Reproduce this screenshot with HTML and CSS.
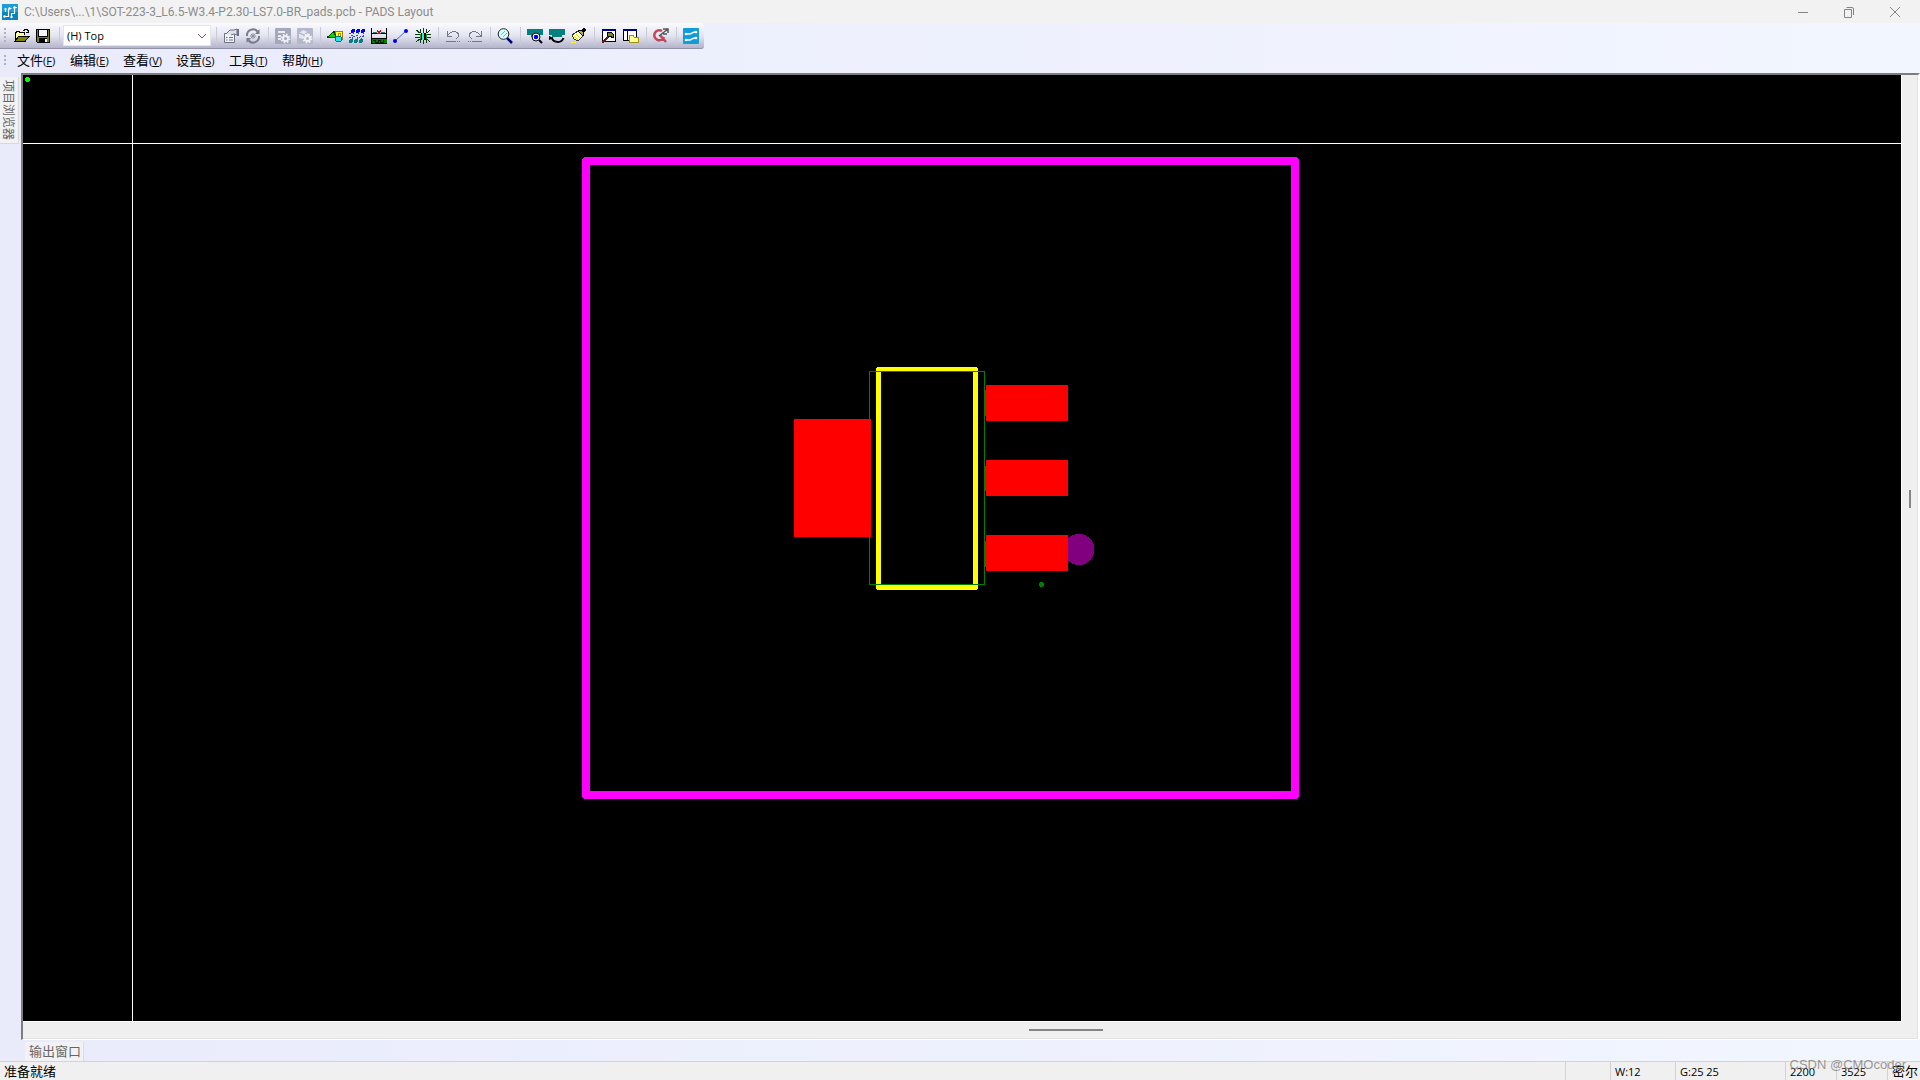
FILE: index.html
```html
<!DOCTYPE html>
<html lang="zh-CN">
<head>
<meta charset="utf-8">
<title>PADS Layout</title>
<link rel="stylesheet" href="styles.css">
</head>
<body>
<div class="app">
  <header class="titlebar">
    <svg class="logo" viewBox="0 0 16 16"><rect width="16" height="16" fill="#0c83bd"/><rect width="16" height="8" fill="#1b9cd8"/><path d="M2.500 12.500H6.500V5M3.500 4.500V8M9.500 13V9.500H12.500V3.500H15M8 4.500H9.500" fill="none" stroke="#fff" stroke-width="1.200"/><g fill="#fff"><circle cx="2.500" cy="12.500" r="1.200"/><circle cx="7.500" cy="4.500" r="1.200"/><circle cx="3.500" cy="5" r="1.100"/><circle cx="9.500" cy="13" r="1.200"/><circle cx="12.500" cy="3.500" r="1.200"/></g></svg>
    <h1 class="title">C:\Users\...\1\SOT-223-3_L6.5-W3.4-P2.30-LS7.0-BR_pads.pcb - PADS Layout</h1>
    <div class="window-buttons">
      <button class="window-button" aria-label="最小化"><svg viewBox="0 0 12 12"><path d="M1 6.500H11"/></svg></button>
      <button class="window-button" aria-label="还原"><svg viewBox="0 0 12 12"><path d="M1.500 3.500h7v8h-7zM3.500 1.500H9Q10.500 1.500 10.500 3V9"/></svg></button>
      <button class="window-button" aria-label="关闭"><svg viewBox="0 0 12 12"><path d="M1 1L11 11M11 1L1 11"/></svg></button>
    </div>
  </header>

  <div class="toolbar" role="toolbar">
    <span class="grip"></span>
    <button class="tool" aria-label="打开"><svg viewBox="0 0 16 16" shape-rendering="crispEdges"><path d="M1 13V4H2V3H5V4H10V7" fill="#ffffa0" stroke="#000"/><path d="M1 13.500L4.500 8.500H15L11 13.500Z" fill="#808000" stroke="#000"/><path d="M9 2.500H10V1.500H13V2.500H14V5M12 4.500H15" fill="none" stroke="#000"/></svg></button>
    <button class="tool" aria-label="保存"><svg viewBox="0 0 16 16" shape-rendering="crispEdges"><path d="M0 1H14V15H1L0 14Z" fill="#000"/><path d="M1 2H2V9H12V2H13V14H1Z" fill="#808000"/><path d="M3 2H11V8H3Z" fill="#f4f4fa"/><path d="M3 10H11V14H3Z" fill="#000"/><path d="M9 11H11V14H9Z" fill="#fff"/></svg></button>
    <span class="separator"></span>
    <label class="layer">
      <select class="layer-select" aria-label="层"><option>(H) Top</option></select>
      <svg class="layer-arrow" viewBox="0 0 10 6"><path d="M1 1L5 5L9 1" fill="none" stroke="#666"/></svg>
    </label>
    <span class="separator"></span>
    <button class="tool" aria-label="特性"><svg viewBox="0 0 16 16"><path d="M1.500 5.500H11.500V14.500H1.500Z" fill="#f1f2f7" stroke="#6d7183"/><path d="M3 9.500h1.500M6 9.500h4M3 12h1.500M6 12h4" stroke="#6d7183"/><path d="M3 6L7 2H11L14 1V7L11 6L8 7" fill="#dfe1e9" stroke="#6d7183"/><path d="M14 1H16V8H14Z" fill="#6d7183"/></svg></button>
    <button class="tool" aria-label="循环"><svg viewBox="0 0 16 16"><path d="M2 8A6 6 0 0 1 12.500 3.500M14 8A6 6 0 0 1 3.500 12.500" fill="none" stroke="#777b8a" stroke-width="2"/><path d="M14.500 1V6H10ZM1.500 15V10H6Z" fill="#777b8a"/><path d="M8 5V11M5 8H11M6 6L10 10M10 6L6 10" stroke="#898d9b"/></svg></button>
    <span class="separator"></span>
    <button class="tool" aria-label="选项设置"><svg viewBox="0 0 16 16"><rect width="16" height="16" rx="1" fill="#a3a8ba"/><path d="M3 3H10V5H3ZM3 7H6V9H3ZM3 10H6V12H3Z" fill="#e9ebf3"/><g fill="none" stroke="#eef0f7"><circle cx="10.500" cy="10.500" r="2.500" stroke-width="2"/><circle cx="10.500" cy="10.500" r="4" stroke-width="2" stroke-dasharray="1.600 1.540"/></g></svg></button>
    <button class="tool" aria-label="显示设置"><svg viewBox="0 0 16 16"><rect width="16" height="16" rx="1" fill="#b4b8c8"/><path d="M2 5L6 2L11 4V7L6 11L2 10Z" fill="#e4e7f0"/><path d="M2 5L7 7L11 4M7 7V11" stroke="#a3a8ba" fill="none"/><g fill="none" stroke="#f2f3f9"><circle cx="10.500" cy="10.500" r="2.500" stroke-width="2"/><circle cx="10.500" cy="10.500" r="4" stroke-width="2" stroke-dasharray="1.600 1.540"/></g></svg></button>
    <span class="separator"></span>
    <button class="tool" aria-label="绘图工具栏"><svg viewBox="0 0 16 16" shape-rendering="crispEdges"><path d="M8.500 3.500H15.500V11H8.500Z" fill="#ffff20" stroke="#a08000"/><path d="M11 5.500H13V9H11Z" fill="#ffff80" stroke="#b09000"/><path d="M0 9.500L7 3.500L9 9.500Z" fill="#00e000" stroke="#004000"/><circle cx="11.500" cy="11" r="3" fill="#20e8f0" stroke="#007080"/></svg></button>
    <button class="tool" aria-label="设计工具栏"><svg viewBox="0 0 16 16" shape-rendering="crispEdges"><g fill="#0000e8"><circle cx="4" cy="3" r="2"/><circle cx="9" cy="3" r="2"/><circle cx="14" cy="3" r="2"/></g><g fill="#008080"><circle cx="2" cy="13" r="2"/><circle cx="7" cy="13" r="2"/><circle cx="12" cy="13" r="2"/></g><path d="M4 4V7H1M9 4V7L3 9V12M14 4V8L8 10V12M15 8L12 12M0 5H2M0 9H2" fill="none" stroke="#2050c0" stroke-dasharray="2 1"/></svg></button>
    <button class="tool" aria-label="尺寸标注工具栏"><svg viewBox="0 0 16 16" shape-rendering="crispEdges"><path d="M0 10H16V15H0Z" fill="#008000" stroke="#000"/><path d="M.5 0V16M15.500 0V11M1 5.500H6M10 5.500H15" stroke="#000"/><path d="M2 13V12H4V14H7V12H9V14H12V12" stroke="#002000" fill="none"/><path d="M6 2L8 5L10 2M6 5H10" stroke="#e00000" fill="none"/><path d="M2 4.500H6M10 4.500H14" stroke="#208070"/></svg></button>
    <button class="tool" aria-label="ECO 工具栏"><svg viewBox="0 0 16 16"><path d="M2 13L13 3" stroke="#3070c0"/><g fill="#0000f0"><circle cx="2" cy="13" r="2"/><circle cx="13" cy="3" r="2"/></g></svg></button>
    <button class="tool" aria-label="BGA 工具栏"><svg viewBox="0 0 16 16" shape-rendering="crispEdges"><path d="M5.500 1V5M8.500 0V5M11.500 1V5M5.500 11V15M8.500 11V16M11.500 11V15M0 6.500H5M0 9.500H5M11 6.500H16M11 9.500H16M1 2L5 5M15 2L12 5M1 14L5 11M15 14L12 11" stroke="#0a3812" fill="none"/><path d="M6 5H11V12H6Z" fill="#000"/><path d="M7 5H9V12H7Z" fill="#20f0f0"/><path d="M5 6v5M11 6v5" stroke="#20a020"/></svg></button>
    <span class="separator"></span>
    <button class="tool" aria-label="撤销"><svg viewBox="0 0 16 16" shape-rendering="crispEdges"><path d="M2 3V8H7M2 8L5 5Q8 3 11 4Q15 6 13 9L11 11" fill="none" stroke="#73778a"/><path d="M1 13.500H11" stroke="#73778a"/><path d="M12 13.500H15" stroke="#73778a" stroke-dasharray="1 1"/></svg></button>
    <button class="tool" aria-label="重做"><svg viewBox="0 0 16 16" shape-rendering="crispEdges"><path d="M14 3V8H9M14 8L11 5Q8 3 5 4Q1 6 3 9L5 11" fill="none" stroke="#73778a"/><path d="M5 13.500H15" stroke="#73778a"/><path d="M1 13.500H5" stroke="#73778a" stroke-dasharray="1 1"/></svg></button>
    <span class="separator"></span>
    <button class="tool" aria-label="缩放"><svg viewBox="0 0 16 16"><path d="M10 10L15 15" stroke="#000080" stroke-width="2.500"/><circle cx="6.500" cy="6" r="5.300" fill="#d8ffff" stroke="#222"/><path d="M4 7L8 3M6 9L10 5" stroke="#20dcec"/></svg></button>
    <span class="separator"></span>
    <button class="tool" aria-label="板"><svg viewBox="0 0 16 16"><path d="M0 1H16V7H13V9H4V7H0Z" fill="#008080"/><path d="M12 12L15 15" stroke="#000" stroke-width="2"/><circle cx="9" cy="9" r="4" fill="#fff" stroke="#000"/><circle cx="9" cy="9" r="2.300" fill="#0000f0"/></svg></button>
    <button class="tool" aria-label="刷新"><svg viewBox="0 0 16 16"><path d="M0 1H16V7H13V9H3V7H0Z" fill="#008080"/><path d="M2.500 9.500Q4 14 9 14Q13 14 14.500 10" fill="none" stroke="#000" stroke-width="2"/><path d="M0 12V8L5 10Z" fill="#000"/></svg></button>
    <button class="tool" aria-label="重画"><svg viewBox="0 0 16 16" shape-rendering="crispEdges"><path d="M1 7L7 3L12 8L7 13L3 11Z" fill="#fffff0" stroke="#333"/><path d="M3 8L7 12M5 6L9 10" stroke="#e0d800"/><path d="M7 3L10 2L13 5L12 8Z" fill="#c0b820" stroke="#000"/><path d="M11 4L14 1" stroke="#000" stroke-width="3"/><path d="M0 14.500H6" stroke="#ffff20" stroke-dasharray="2 1"/></svg></button>
    <span class="separator"></span>
    <button class="tool" aria-label="选项"><svg viewBox="0 0 16 16" shape-rendering="crispEdges"><rect x="1.500" y="1.500" width="13" height="12" fill="#fff" stroke="#000"/><path d="M1 1H15V3H1Z" fill="#000080"/><path d="M1 15L9 7" stroke="#701010" stroke-width="2"/><path d="M6 4H10L13 7L12 10L9 8L7 8Z" fill="#808020" stroke="#000"/></svg></button>
    <button class="tool" aria-label="项目浏览器"><svg viewBox="0 0 16 16" shape-rendering="crispEdges"><rect x=".5" y="1.500" width="13" height="11" fill="#fff" stroke="#000"/><path d="M0 1H14V3H0Z" fill="#000080"/><path d="M4.500 3V12" stroke="#000"/><path d="M6.500 14V7H10L11 9H15V14Z" fill="#ffff90" stroke="#a09010"/></svg></button>
    <span class="separator"></span>
    <button class="tool" aria-label="快速查询"><svg viewBox="0 0 16 16"><path d="M9 3A5 5 0 1 0 11 9M7 7L13 14" fill="none" stroke="#c04858" stroke-width="2.500"/><path d="M6 8L15 1M10 1H15V5M10 6H14" fill="none" stroke="#555" stroke-width="1.500"/></svg></button>
    <span class="separator"></span>
    <button class="tool" aria-label="PADS Router"><svg viewBox="0 0 16 16"><rect width="16" height="16" rx="1" fill="#109cd8"/><path d="M2 6H6Q8 6 9 5Q10 4 14 4M2 12H6Q8 12 9 11Q10 10 14 10" fill="none" stroke="#fff" stroke-width="1.300"/><g fill="#fff"><circle cx="3" cy="6" r="1.300"/><circle cx="13" cy="4" r="1.300"/><circle cx="3" cy="12" r="1.300"/><circle cx="13" cy="10" r="1.300"/></g></svg></button>
  </div>

  <nav class="menubar">
    <span class="grip grip-short"></span>
    <button class="menu">文件<small>(<u>F</u>)</small></button>
    <button class="menu">编辑<small>(<u>E</u>)</small></button>
    <button class="menu">查看<small>(<u>V</u>)</small></button>
    <button class="menu">设置<small>(<u>S</u>)</small></button>
    <button class="menu">工具<small>(<u>T</u>)</small></button>
    <button class="menu">帮助<small>(<u>H</u>)</small></button>
  </nav>

  <main class="workspace">
    <aside class="dock"><button class="dock-tab">项目浏览器</button></aside>
    <section class="view">
      <svg class="board" viewBox="0 0 1878 946" preserveAspectRatio="xMidYMid meet" shape-rendering="crispEdges">
        <path d="M109.500 0V946M0 68.500H1878" stroke="#fff"/>
        <circle cx="4.500" cy="4.500" r="2.500" fill="#0f0"/>
        <rect x="563" y="86" width="709" height="634" fill="none" stroke="#f0f" stroke-width="8" stroke-linejoin="round"/>
        <rect x="855.500" y="294.500" width="97" height="218" fill="none" stroke="#ff0" stroke-width="5" stroke-linejoin="round"/>
        <rect x="846.500" y="296.500" width="115" height="213" fill="none" stroke="#008000"/>
        <path d="M961 315h2v26h-2zM961 391h2v25h-2zM961 466h2v26h-2z" fill="#008000"/>
        <circle cx="1056" cy="474.500" r="15.500" fill="#800080"/>
        <g fill="#f00">
          <rect x="771" y="344" width="77" height="118"/>
          <rect x="963" y="310" width="82" height="36"/>
          <rect x="963" y="385" width="82" height="36"/>
          <rect x="963" y="460" width="82" height="36"/>
        </g>
        <circle cx="1018.500" cy="509.500" r="2.500" fill="#008000"/>
      </svg>
      <div class="scroll scroll-vertical"><span class="thumb"></span></div>
      <div class="scroll scroll-horizontal"><span class="thumb"></span></div>
      <div class="corner"></div>
    </section>
  </main>

  <div class="output"><button class="output-tab">输出窗口</button></div>

  <footer class="status">
    <span class="status-message">准备就绪</span>
    <span class="cell cell-small"></span>
    <span class="cell cell-width">W:12</span>
    <span class="cell cell-grid">G:25 25</span>
    <span class="cell cell-coord">2200</span>
    <span class="cell cell-coord">3525</span>
    <span class="cell cell-unit">密尔</span>
    <span class="watermark">CSDN @CMOcoder</span>
  </footer>
</div>
</body>
</html>
```
FILE: styles.css
```css
* { box-sizing: border-box; }

body {
  margin: 0;
  font: 12px/16px "Open Sans", "Noto Sans CJK SC", sans-serif;
  color: #000;
}

button {
  margin: 0;
  padding: 0;
  border: 0;
  background: none;
  color: inherit;
  font: inherit;
}

svg { display: block; }

.app {
  display: flex;
  flex-direction: column;
  height: 100vh;
  overflow: hidden;
  background: linear-gradient(90deg, #e9ebfb, #f2f6ff);
}

.titlebar {
  display: flex;
  align-items: center;
  height: 23px;
  padding: 0 2px;
  background: #f2f2f2;
}

.logo {
  width: 16px;
  height: 16px;
  margin-right: 6px;
}

.title {
  flex: 1;
  margin: 0;
  font-family: Roboto, sans-serif;
  font-size: 12px;
  font-weight: 400;
  color: #8c8c8c;
}

.window-buttons { display: flex; }

.window-button {
  display: grid;
  place-items: center;
  width: 46px;
  height: 20px;
}

.window-button svg {
  width: 12px;
  height: 12px;
  fill: none;
  stroke: #858585;
}

.toolbar {
  display: flex;
  align-items: center;
  align-self: flex-start;
  gap: 6px;
  height: 26px;
  padding: 0 5px 0 4px;
  border-bottom: 1px solid #9292a8;
  border-radius: 0 3px 3px 0;
  background: linear-gradient(#fafaff, #e4e5f0 50%, #b4b4cc);
}

.grip {
  width: 4px;
  height: 16px;
  background: repeating-linear-gradient(#b0b0ba 0 2px, transparent 2px 4px);
  background-size: 2px 100%;
  background-repeat: no-repeat;
}

.grip-short { height: 10px; }

.tool {
  flex: none;
  width: 16px;
  height: 16px;
}

.separator {
  width: 2px;
  height: 18px;
  border-right: 1px solid #c9cbd6;
}

.layer {
  position: relative;
  width: 148px;
  margin: 0 -2px 0 -3px;
}

.layer-select {
  display: block;
  width: 100%;
  height: 21px;
  padding: 0 3px;
  border: 1px solid #e4e4ea;
  border-radius: 0;
  appearance: none;
  background: #fff;
  color: #000;
  font: 11px/16px "Open Sans", sans-serif;
}

.layer-arrow {
  position: absolute;
  top: 8px;
  right: 4px;
  width: 10px;
  height: 6px;
}

.menubar {
  display: flex;
  align-items: center;
  height: 24px;
  padding: 0 4px 2px;
}

.menu {
  width: 53px;
  padding-left: 9px;
  font-size: 13px;
  text-align: left;
  white-space: nowrap;
}

.menu small { font-size: 11px; }

.workspace {
  display: flex;
  flex: 1;
  min-height: 0;
}

.dock {
  width: 21px;
  padding-top: 4px;
}

.dock-tab {
  width: 19px;
  height: 67px;
  padding-right: 2px;
  border-right: 1px solid #d8d8d8;
  border-bottom: 1px solid #d8d8d8;
  background: #f2f2f4;
  color: #666;
  font-size: 12px;
  line-height: 16px;
  writing-mode: vertical-rl;
  text-orientation: sideways;
}

.view {
  display: grid;
  grid-template: minmax(0, 1fr) 18px / minmax(0, 1fr) 17px;
  flex: 1;
  min-width: 0;
  border-style: solid;
  border-width: 2px 2px 1px;
  border-color: #7d7d7d #fff #fff #7d7d7d;
}

.board {
  width: 100%;
  height: 100%;
  background: #000;
}

.scroll {
  display: flex;
  align-items: center;
  background: #efefef;
}

.scroll::before,
.scroll::after { content: ""; }

.thumb {
  flex: none;
  background: #858585;
}

.scroll-vertical {
  flex-direction: column;
  border-left: 1px solid #fff;
  border-right: 1px solid #e2e2e2;
}

.scroll-vertical::before { flex: 17; }
.scroll-vertical::after { flex: 21; }
.scroll-horizontal::before { flex: 63; }
.scroll-horizontal::after { flex: 50; }

.scroll-vertical .thumb {
  width: 2px;
  height: 18px;
}

.scroll-horizontal {
  border-top: 1px solid #fff;
  border-bottom: 1px solid #e2e2e2;
}

.scroll-horizontal .thumb {
  width: 74px;
  height: 2px;
}

.corner {
  border-right: 1px solid #e2e2e2;
  border-bottom: 1px solid #e2e2e2;
  background: #efefef;
}

.output {
  height: 21px;
  padding: 2px 25px 0;
}

.output-tab {
  height: 19px;
  padding: 0 2px 2px 4px;
  border-right: 1px solid #dcdcdc;
  background: #f2f2f4;
  color: #666;
  font-size: 13px;
}

.status {
  position: relative;
  display: flex;
  align-items: stretch;
  height: 19px;
  padding-right: 1px;
  border-top: 1px solid #d2d2d8;
  background: #f0f0f0;
  line-height: 20px;
}

.status-message {
  flex: 1;
  padding-left: 4px;
  font-size: 13px;
  line-height: 18px;
}

.cell {
  padding-left: 4px;
  border-left: 1px solid #d2d2d2;
  font-size: 11px;
  white-space: nowrap;
}

.cell-small { width: 45px; }
.cell-width { width: 65px; }
.cell-grid { width: 110px; }
.cell-coord { width: 51px; }

.cell-unit {
  width: 32px;
  font-size: 13px;
  line-height: 18px;
}

.watermark {
  position: absolute;
  right: 14px;
  bottom: 5px;
  color: rgba(110, 110, 110, 0.7);
  font: 13px/20px "Liberation Sans", sans-serif;
}
```
